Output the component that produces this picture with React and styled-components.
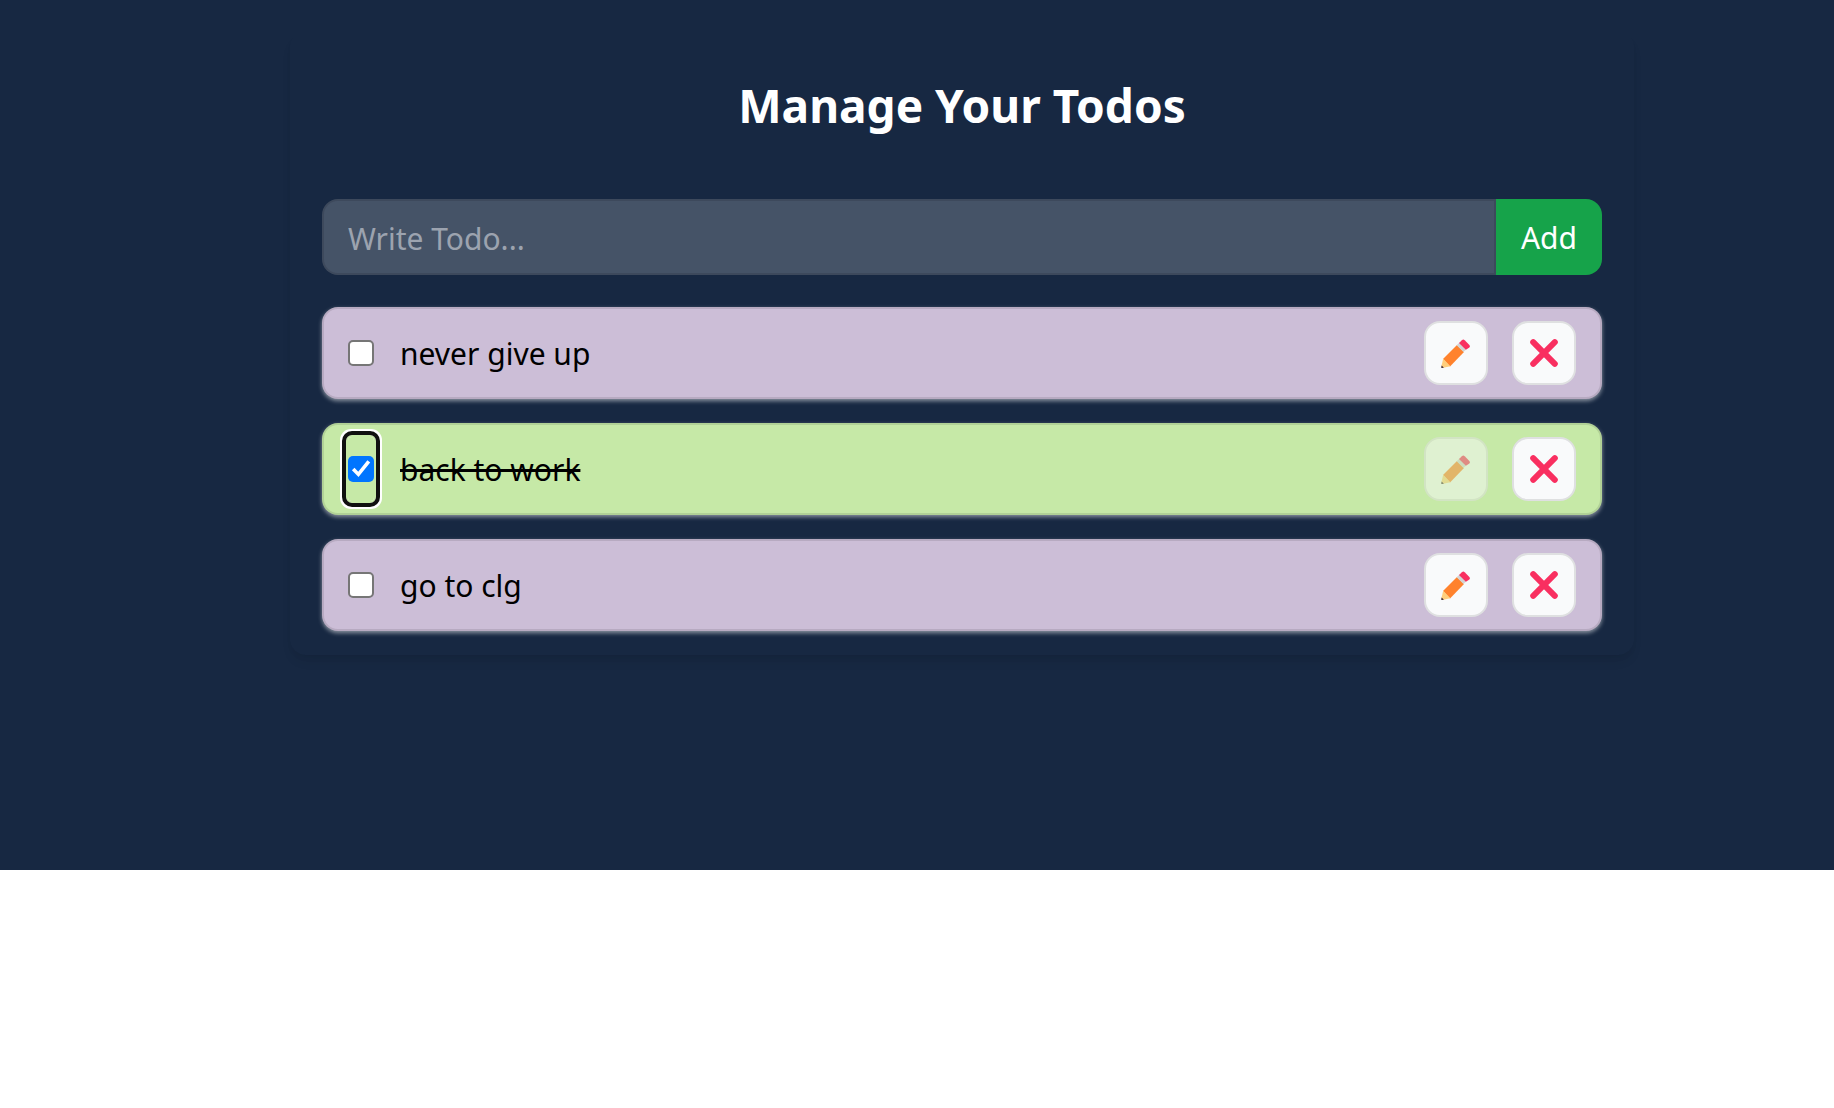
import React, { useState } from "react";
import styled, { createGlobalStyle, css } from "styled-components";

const GlobalStyle = createGlobalStyle`
  *, *::before, *::after { box-sizing: border-box; }
  body {
    margin: 0;
    background: #ffffff;
    font-family: "Segoe UI", "Noto Sans", "Open Sans", sans-serif;
    font-size: 30px;
    line-height: 48px;
  }
  button, input { font: inherit; }
`;

const Page = styled.main`
  min-height: 870px;
  padding: 32px 0 32px 90px;
  background: #172842;
  color: #ffffff;
`;

const Card = styled.section`
  max-width: 1344px;
  margin: 0 auto;
  padding: 24px 32px;
  border-radius: 16px;
  box-shadow: 0 8px 12px -2px rgba(0, 0, 0, 0.07), 0 4px 8px -4px rgba(0, 0, 0, 0.07);
`;

const Title = styled.h1`
  margin: 17px 0 62px;
  font-size: 46px;
  line-height: 64px;
  font-weight: 700;
  text-align: center;
`;

const Form = styled.form`
  display: flex;
  height: 76px;
  margin-bottom: 32px;
`;

const TodoInput = styled.input`
  flex: 1;
  min-width: 0;
  padding: 14px 24px 10px;
  border: 2px solid rgba(0, 0, 0, 0.1);
  border-radius: 16px 0 0 16px;
  background: rgba(255, 255, 255, 0.2);
  color: #ffffff;
  outline: none;

  &::placeholder {
    color: #9ca3af;
    opacity: 1;
  }
`;

const AddButton = styled.button`
  width: 106px;
  padding: 2px 0 0;
  border: 0;
  border-radius: 0 16px 16px 0;
  background: #16a34a;
  color: #ffffff;
  cursor: pointer;
`;

const List = styled.ul`
  display: flex;
  flex-direction: column;
  gap: 24px;
  margin: 0;
  padding: 0;
  list-style: none;
`;

const Row = styled.li`
  --row: ${(p) => (p.$done ? "#c6e9a7" : "#ccbed7")};
  display: flex;
  align-items: center;
  gap: 24px;
  padding: 12px 24px;
  border: 2px solid rgba(0, 0, 0, 0.1);
  border-radius: 16px;
  background: var(--row);
  color: #000000;
  box-shadow: 0 2px 4px rgba(255, 255, 255, 0.5);
`;

const tick = encodeURIComponent(
  '<svg xmlns="http://www.w3.org/2000/svg" viewBox="0 0 26 26"><path d="M5.2 13 10.4 18.4 20.8 5.4" fill="none" stroke="#fff" stroke-width="3.6"/></svg>'
);

const Checkbox = styled.input`
  appearance: none;
  display: grid;
  place-items: center;
  flex: none;
  width: 26px;
  height: 64px;
  margin: 0;
  border-radius: 4px;
  cursor: pointer;

  &::before {
    content: "";
    width: 26px;
    height: 26px;
    border: 2px solid #767676;
    border-radius: 5px;
    background: #ffffff;
  }

  &:checked::before {
    border: 0;
    background: #0075ff url("data:image/svg+xml,${tick}") center / 26px 26px;
  }

  &:focus {
    outline: 4px solid #101010;
    outline-offset: 2px;
    box-shadow: 0 0 0 2px var(--row), 0 0 0 8px #ffffff;
  }
`;

const TodoLabel = styled.label`
  flex: 1;
  min-width: 0;
  padding: 2px 2px 0;
  cursor: pointer;
  ${(p) =>
    p.$done &&
    css`
      text-decoration: line-through;
      text-decoration-thickness: 3px;
    `}
`;

const IconButton = styled.button`
  display: grid;
  place-items: center;
  flex: none;
  width: 64px;
  height: 64px;
  padding: 0;
  border: 2px solid rgba(0, 0, 0, 0.1);
  border-radius: 16px;
  background: #f9fafb;
  cursor: pointer;

  &:disabled {
    opacity: 0.5;
    cursor: default;
  }
`;

const Pencil = () => (
  <svg width="30" height="30" viewBox="0 0 30 30" aria-hidden="true">
    <path d="M2 21 16 7 23 14 9 28.5Z" fill="#ff822d" />
    <path d="M15.7 7.3 18.5 4.5 25.3 11.3 22.5 14.1Z" fill="#d3d3d3" />
    <path d="M18 5 20.9 2.2Q22.3.9 23.7 2.2L28.4 6.9Q29.6 8.2 28.4 9.4L24.9 11.8Z" fill="#f92f60" />
    <path d="M2.2 20.8 9.3 28.3 2.4 29.8.4 28.2Z" fill="#ffce7c" />
    <path d="M.7 27.4 2.9 29.7.9 30Q.1 30 .2 29.2Z" fill="#402a32" />
  </svg>
);

const Cross = () => (
  <svg width="28" height="28" viewBox="0 0 28 28" aria-hidden="true">
    <path d="M3.2 3.2 24.8 24.8M24.8 3.2 3.2 24.8" stroke="#f92f60" strokeWidth="6" strokeLinecap="round" />
  </svg>
);

const initialTodos = [
  { id: 1, text: "never give up", done: false },
  { id: 2, text: "back to work", done: true },
  { id: 3, text: "go to clg", done: false },
];

export default function App() {
  const [todos, setTodos] = useState(initialTodos);
  const [draft, setDraft] = useState("");

  const add = (event) => {
    event.preventDefault();
    if (!draft.trim()) return;
    setTodos([...todos, { id: Date.now(), text: draft, done: false }]);
    setDraft("");
  };
  const toggle = (id) => setTodos(todos.map((t) => (t.id === id ? { ...t, done: !t.done } : t)));
  const remove = (id) => setTodos(todos.filter((t) => t.id !== id));
  const edit = (todo) => {
    setDraft(todo.text);
    remove(todo.id);
  };

  return (
    <>
      <GlobalStyle />
      <Page>
        <Card>
          <Title>Manage Your Todos</Title>
          <Form onSubmit={add}>
            <TodoInput
              aria-label="Write Todo"
              placeholder="Write Todo..."
              value={draft}
              onChange={(e) => setDraft(e.target.value)}
            />
            <AddButton type="submit">Add</AddButton>
          </Form>
          <List>
            {todos.map((todo) => (
              <Row key={todo.id} $done={todo.done}>
                <Checkbox
                  type="checkbox"
                  id={`todo-${todo.id}`}
                  checked={todo.done}
                  autoFocus={todo.id === 2}
                  onChange={() => toggle(todo.id)}
                />
                <TodoLabel htmlFor={`todo-${todo.id}`} $done={todo.done}>
                  {todo.text}
                </TodoLabel>
                <IconButton type="button" aria-label="Edit" disabled={todo.done} onClick={() => edit(todo)}>
                  <Pencil />
                </IconButton>
                <IconButton type="button" aria-label="Delete" onClick={() => remove(todo.id)}>
                  <Cross />
                </IconButton>
              </Row>
            ))}
          </List>
        </Card>
      </Page>
    </>
  );
}
